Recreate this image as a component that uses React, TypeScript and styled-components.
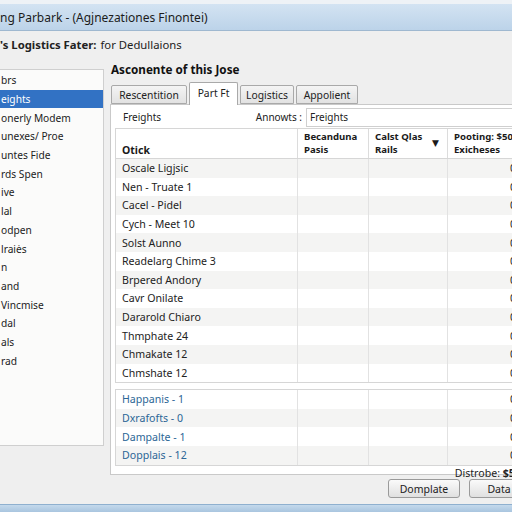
import { createGlobalStyle, styled } from 'styled-components';

const GlobalStyle = createGlobalStyle`
  html, body {
    margin: 0;
    padding: 0;
    background: #efefef;
  }
  body {
    font-family: 'Noto Sans', 'DejaVu Sans', sans-serif;
    color: #222;
  }
`;

const NAV_ITEMS = [
  'brs',
  'eights',
  'onerly Modem',
  'unexes/ Proe',
  'untes Fide',
  'rds Spen',
  'ive',
  'lal',
  'odpen',
  'lraiės',
  'n',
  'and',
  'Vincmise',
  'dal',
  'als',
  'rad',
];

const TABS = [
  { label: 'Rescentition', width: 76 },
  { label: 'Part Ft', width: 49 },
  { label: 'Logistics', width: 54 },
  { label: 'Appolient', width: 62 },
];

const MAIN_ROWS = [
  'Oscale Ligjsic',
  'Nen - Truate 1',
  'Cacel - Pidel',
  'Cych - Meet 10',
  'Solst Aunno',
  'Readelarg Chime 3',
  'Brpered Andory',
  'Cavr Onilate',
  'Dararold Chiaro',
  'Thmphate 24',
  'Chmakate 12',
  'Chmshate 12',
];

const LINK_ROWS = ['Happanis - 1', 'Dxrafofts - 0', 'Dampalte - 1', 'Dopplais - 12'];

export default function App() {
  return (
    <Window>
      <GlobalStyle />
      <TitleBar>ng Parbark - (Agjnezationes Finontei)</TitleBar>
      <SubHeader>
        <strong>f's Logistics Fater:</strong> for Dedullaions
      </SubHeader>
      <Body>
        <Sidebar>
          {NAV_ITEMS.map((item, i) => (
            <NavItem key={item} $selected={i === 1}>
              {item}
            </NavItem>
          ))}
        </Sidebar>
        <Main>
          <Heading>Asconente of this Jose</Heading>
          <TabBar>
            {TABS.map((tab, i) => (
              <Tab key={tab.label} $active={i === 1} $width={tab.width}>
                {tab.label}
              </Tab>
            ))}
          </TabBar>
          <Panel>
            <FilterRow>
              <FilterLabel>Freights</FilterLabel>
              <FieldLabel>Annowts :</FieldLabel>
              <Field>Freights</Field>
            </FilterRow>
            <Table>
              <HeaderRow>
                <HeadCell>Otick</HeadCell>
                <HeadCell>
                  Becanduna
                  <br />
                  Pasis
                </HeadCell>
                <HeadCell>
                  <span>
                    Calst Qlas
                    <br />
                    Rails
                  </span>
                  <SortArrow>▼</SortArrow>
                </HeadCell>
                <HeadCell>
                  Pooting: $505
                  <br />
                  Exicheses
                </HeadCell>
              </HeaderRow>
              {MAIN_ROWS.map((row, i) => (
                <Row key={row} $odd={i % 2 === 0}>
                  <Cell>{row}</Cell>
                  <Cell />
                  <Cell />
                  <NumCell>0</NumCell>
                </Row>
              ))}
            </Table>
            <Table $gap>
              {LINK_ROWS.map((row, i) => (
                <Row key={row} $odd={i % 2 === 1}>
                  <Cell $link>{row}</Cell>
                  <Cell />
                  <Cell />
                  <NumCell>0</NumCell>
                </Row>
              ))}
            </Table>
            <Total>
              Distrobe: <b>$505</b>
            </Total>
          </Panel>
          <ButtonRow>
            <Button>Domplate</Button>
            <Button $wide>Data</Button>
          </ButtonRow>
        </Main>
      </Body>
      <BottomFrame />
    </Window>
  );
}

const Window = styled.div`
  width: 512px;
  height: 512px;
  overflow: hidden;
  display: flex;
  flex-direction: column;
  background: #efefef;
  font-size: 11px;
`;

const TitleBar = styled.div`
  height: 26px;
  flex: none;
  border-top: 4px solid #eef2f6;
  background: linear-gradient(#d3e3f2, #bcd3e9);
  border-bottom: 1px solid #9fb8d0;
  display: flex;
  align-items: center;
  font-size: 12px;
  color: #1c1c1c;
  white-space: nowrap;
`;

const SubHeader = styled.div`
  height: 27px;
  flex: none;
  display: flex;
  align-items: center;
  margin-left: -5px;
  font-size: 11.3px;
  white-space: nowrap;
  color: #222;

  strong {
    margin-right: 4px;
  }
`;

const Body = styled.div`
  flex: 1;
  display: flex;
  gap: 6px;
  min-height: 0;
`;

const Sidebar = styled.div`
  width: 104px;
  flex: none;
  margin-top: 11px;
  height: 377px;
  background: #fbfbfa;
  border: 1px solid #cfcfcf;
  border-left: none;
  padding-top: 1px;
  box-sizing: border-box;
  overflow: hidden;
`;

const NavItem = styled.div<{ $selected?: boolean }>`
  height: 18.7px;
  display: flex;
  align-items: center;
  padding-left: 1px;
  white-space: nowrap;
  font-size: 10.2px;
  background: ${(p) => (p.$selected ? '#3272c4' : 'transparent')};
  color: ${(p) => (p.$selected ? '#fff' : '#222')};
`;

const Main = styled.div`
  width: 412px;
  flex: none;
  display: flex;
  flex-direction: column;
`;

const Heading = styled.div`
  height: 22px;
  display: flex;
  align-items: center;
  padding-left: 1px;
  font-size: 11.7px;
  font-weight: bold;
  color: #111;
`;

const TabBar = styled.div`
  height: 24px;
  display: flex;
  align-items: flex-end;
  gap: 2px;
  padding-left: 1px;
`;

const Tab = styled.div<{ $active?: boolean; $width: number }>`
  width: ${(p) => p.$width}px;
  height: ${(p) => (p.$active ? '23px' : '19px')};
  box-sizing: border-box;
  display: flex;
  align-items: center;
  justify-content: center;
  padding-bottom: ${(p) => (p.$active ? '3px' : '0')};
  border: 1px solid #a9a9a9;
  border-bottom: ${(p) => (p.$active ? 'none' : '1px solid #a9a9a9')};
  border-radius: 2px 2px 0 0;
  background: ${(p) => (p.$active ? '#fff' : 'linear-gradient(#f4f4f4, #e2e2e2)')};
  font-size: 10.3px;
  color: #222;
  margin-bottom: ${(p) => (p.$active ? '-1px' : '0')};
  position: relative;
`;

const Panel = styled.div`
  background: #fff;
  border: 1px solid #c9c9c9;
  border-right: none;
  height: 371px;
  box-sizing: border-box;
  padding: 3px 0 0 4px;
  display: flex;
  flex-direction: column;
`;

const FilterRow = styled.div`
  height: 18px;
  display: flex;
  align-items: center;
  font-size: 10px;
  margin-bottom: 2px;
`;

const FilterLabel = styled.div`
  padding-left: 8px;
  width: 127px;
`;

const FieldLabel = styled.div`
  width: 52px;
  text-align: right;
  padding-right: 4px;
`;

const Field = styled.div`
  flex: 1;
  height: 17px;
  border: 1px solid #cfcfcf;
  display: flex;
  align-items: center;
  padding-left: 3px;
`;

const Table = styled.div<{ $gap?: boolean }>`
  width: 410px;
  border: 1px solid #d6d6d6;
  margin-top: ${(p) => (p.$gap ? '6px' : '0')};
`;

const HeaderRow = styled.div`
  display: grid;
  grid-template-columns: 181px 71px 79px 1fr;
  height: 29px;
  border-bottom: 1px solid #d6d6d6;
`;

const HeadCell = styled.div`
  display: flex;
  align-items: flex-end;
  justify-content: space-between;
  padding: 0 6px 2px 6px;
  font-size: 9.6px;
  font-weight: bold;
  line-height: 12.5px;
  border-left: 1px solid #dcdcdc;
  white-space: nowrap;
  color: #1a1a1a;

  &:first-child {
    border-left: none;
    font-size: 10.5px;
  }
`;

const SortArrow = styled.span`
  font-size: 9px;
  margin-bottom: 7px;
  margin-right: 2px;
`;

const Row = styled.div<{ $odd?: boolean }>`
  display: grid;
  grid-template-columns: 181px 71px 79px 1fr;
  height: 18.6px;
  background: ${(p) => (p.$odd ? '#f4f4f3' : '#fff')};
`;

const Cell = styled.div<{ $link?: boolean }>`
  display: flex;
  align-items: center;
  padding-left: 6px;
  font-size: 10.6px;
  white-space: nowrap;
  color: ${(p) => (p.$link ? '#2c6696' : '#222')};
  border-left: 1px solid #e2e2e2;

  &:first-child {
    border-left: none;
  }
`;

const NumCell = styled(Cell)`
  justify-content: flex-end;
  padding-right: 10px;
`;

const Total = styled.div`
  width: 412px;
  text-align: right;
  font-size: 10.6px;
  white-space: nowrap;
  height: 14px;
  line-height: 14px;
  margin-top: 0;
`;

const ButtonRow = styled.div`
  display: flex;
  justify-content: flex-end;
  gap: 9px;
  padding-top: 4px;
  margin-right: -7px;
`;

const Button = styled.div<{ $wide?: boolean }>`
  width: ${(p) => (p.$wide ? '60px' : '72px')};
  height: 19px;
  box-sizing: border-box;
  border: 1px solid #9a9a9a;
  border-radius: 3px;
  background: linear-gradient(#fafafa, #e0e0e0);
  display: flex;
  align-items: center;
  justify-content: center;
  font-size: 10.5px;
  color: #222;
`;

const BottomFrame = styled.div`
  height: 7px;
  flex: none;
  background: linear-gradient(#c4d9ec, #a9c5df);
  border-top: 1px solid #8fb0cf;
`;
